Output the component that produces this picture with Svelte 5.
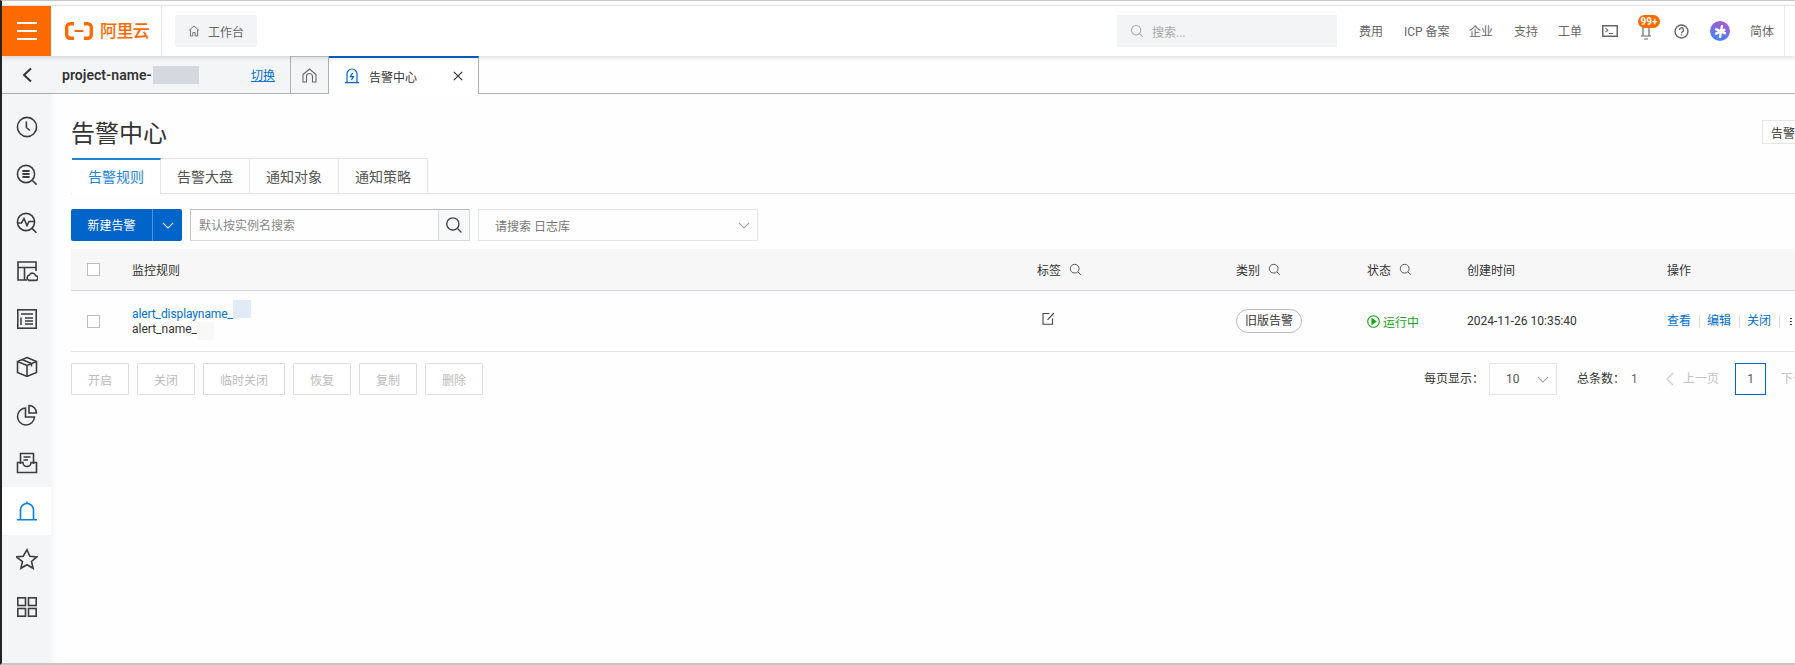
<script>
	const navLinks = [
		{ label: "费用", width: 45 },
		{ label: "ICP 备案", width: 65 },
		{ label: "企业", width: 45 },
		{ label: "支持", width: 44 },
		{ label: "工单", width: 44 }
	];
	const tabs = ["告警规则", "告警大盘", "通知对象", "通知策略"];
	const actions = [
		{ label: "开启", width: 58 },
		{ label: "关闭", width: 58 },
		{ label: "临时关闭", width: 82 },
		{ label: "恢复", width: 58 },
		{ label: "复制", width: 58 },
		{ label: "删除", width: 58 }
	];
	const sideIcons = ["clock", "logs", "pulse", "board", "list", "box", "pie", "inbox", "bell", "star", "apps"];
</script>

{#snippet search(size)}
	<svg width={size} height={size} viewBox="0 0 16 16" fill="none" stroke="currentColor" stroke-width="1.2">
		<circle cx="7" cy="7" r="5.4" />
		<path d="M11 11l3.6 3.6" />
	</svg>
{/snippet}

{#snippet chevron()}
	<svg width="12" height="7" viewBox="0 0 14 8" fill="none" stroke="currentColor" stroke-width="1.2">
		<path d="M1 1l6 6 6-6" />
	</svg>
{/snippet}

<div class="page">
	<header class="topbar">
		<div class="burger"><span></span><span></span><span></span></div>
		<div class="brand">
			<svg width="28" height="18" viewBox="0 0 28 18" fill="none" stroke="#ff6a00" stroke-width="3.4">
				<path d="M9 1.7H5.2a3.5 3.5 0 0 0-3.5 3.5v7.6a3.5 3.5 0 0 0 3.5 3.5H9" />
				<path d="M19 1.7h3.8a3.5 3.5 0 0 1 3.5 3.5v7.6a3.5 3.5 0 0 1-3.5 3.5H19" />
				<path d="M9.5 9h9" stroke-width="2" />
			</svg>
			<span>阿里云</span>
		</div>
		<div class="workbench">
			<svg width="12" height="12" viewBox="0 0 12 12" fill="none" stroke="#777" stroke-width="1">
				<path d="M1 5.4L6 1l5 4.4M2.4 4.6v6.4h2.4V7.6h2.4V11h2.4V4.6" />
			</svg>
			<span>工作台</span>
		</div>
		<div class="spacer"></div>
		<div class="topsearch">
			{@render search(14)}
			<span>搜索...</span>
		</div>
		<nav class="links">
			{#each navLinks as link}
				<span style="width: {link.width}px">{link.label}</span>
			{/each}
		</nav>
		<div class="tools">
			<svg class="terminal" width="16" height="12" viewBox="0 0 16 12" fill="none" stroke="#666">
				<rect x="0.75" y="0.75" width="14.5" height="10.5" stroke-width="1.5" />
				<path d="M3.5 3.2l2.3 2-2.3 2M7 8.5h4" stroke-width="1.1" />
			</svg>
			<div class="bell">
				<svg width="12" height="14" viewBox="0 0 12 14" fill="none" stroke="#666" stroke-width="1.2">
					<path d="M3 1v8.5M9 1v8.5M1 10h10M4 13h4" />
				</svg>
				<span class="badge">99+</span>
			</div>
			<svg class="help" width="15" height="15" viewBox="0 0 16 16" fill="none" stroke="#666" stroke-width="1.5">
				<circle cx="8" cy="8" r="6.9" />
				<path d="M5.8 6.3a2.2 2.2 0 1 1 3.3 1.9c-.7.4-1.1.8-1.1 1.7" />
				<path d="M8 11v1.3" />
			</svg>
			<div class="avatar">
				<svg width="13" height="15" viewBox="0 0 12 14" fill="none" stroke="#fff" stroke-width="2.2">
					<path d="M7.5 1L5.5 13M1 4.5l10 4.5M1 9.5L10.5 5" />
				</svg>
			</div>
			<span class="lang">简体</span>
		</div>
	</header>

	<div class="tabbar">
		<div class="project">
			<svg width="12" height="16" viewBox="0 0 12 16" fill="none" stroke="#333" stroke-width="2">
				<path d="M10 1.5L3 8l7 6.5" />
			</svg>
			<span class="project-name">project-name-<i class="blur"></i></span>
			<a href="#switch">切换</a>
		</div>
		<div class="home-tab">
			<svg width="15" height="15" viewBox="0 0 15 15" fill="none" stroke="#666" stroke-width="1.1">
				<path d="M1 6.5L7.5 1 14 6.5V14h-3.5V8.5a3 3 0 0 0-6 0V14H1z" />
			</svg>
		</div>
		<div class="active-tab">
			<svg width="16" height="16" viewBox="0 0 16 16" fill="none" stroke="#0064c8" stroke-width="1.2">
				<path d="M3 14V6a5 5 0 0 1 10 0v8M1 14.6h14" />
				<path d="M8.6 5L6.4 8.6h3.2L7.4 12" />
			</svg>
			<span>告警中心</span>
			<svg class="close" width="10" height="10" viewBox="0 0 10 10" stroke="#333" stroke-width="1.2">
				<path d="M.8.8l8.4 8.4M9.2.8L.8 9.2" />
			</svg>
		</div>
		<div class="tabbar-rest"></div>
	</div>

	<div class="body">
		<aside class="side">
			{#each sideIcons as icon}
				<div class="side-item" class:active={icon === "bell"}>
					<svg width="22" height="22" viewBox="0 0 22 22" fill="none" stroke={icon === "bell" ? "#0a7fe0" : "#3d3d3d"} stroke-width="1.6">
						{#if icon === "clock"}
							<circle cx="11" cy="11" r="9.6" />
							<path d="M10.4 5.5v6l3.4 3" />
						{:else if icon === "logs"}
							<circle cx="10" cy="10" r="8.6" />
							<path d="M16.2 16.2l4.4 4.4" />
							<path d="M6.4 7h7.2M6.4 10h7.2M6.4 13h7.2" stroke-width="2" />
						{:else if icon === "pulse"}
							<circle cx="10" cy="10" r="8.6" />
							<path d="M1 11h4.5l2.5-4.5 3 7 2-4h5.500" fill="#f4f5f7" />
							<path d="M16 16.4l4.4 4.4" />
						{:else if icon === "board"}
							<path d="M11 20H2V2h18v9" />
							<path d="M2 7.5h18M8.5 7.5V20" />
							<path d="M13 20.4h6.5a2.3 2.3 0 0 0 .2-4.6 3.3 3.3 0 0 0-6.2-.8 2.8 2.8 0 0 0-.5 5.4z" fill="#f4f5f7" />
						{:else if icon === "list"}
							<rect x="1.8" y="1.8" width="18.4" height="18.4" />
							<path d="M5 6h12M9 10h8M9 13h8M9 16h8M5 9.5v7.5" stroke-width="1.5" />
						{:else if icon === "box"}
							<path d="M11 1.5L20.5 5.5v11L11 20.5 1.5 16.5v-11z" />
							<path d="M1.5 5.5L11 9.5l9.5-4M11 9.5v11M6 3.5l9.5 4v3" />
						{:else if icon === "pie"}
							<path d="M9.5 4a8.5 8.5 0 1 0 9 9H9.5z" />
							<path d="M13 1.5a7.500 7.500 0 0 1 7.500 7.500H13z" />
						{:else if icon === "inbox"}
							<path d="M4.5 12V1.5h13V12" />
							<path d="M1.5 10.5v10h19v-10h-5.500a4 4 0 0 1-8 0z" />
							<path d="M7.5 5h7M7.5 8h4.500" stroke-width="1.5" />
						{:else if icon === "bell"}
							<path d="M4.5 19V10a6.500 6.500 0 0 1 13 0v9" />
							<path d="M11 1.5v2M1 19.800h20" />
						{:else if icon === "star"}
							<path d="M11 1.8l2.800 6.400 7 .7-5.300 4.600 1.600 6.800-6.100-3.600-6.100 3.600 1.600-6.800L.2 8.900l7-.7z" />
						{:else}
							<rect x="1.8" y="1.8" width="7.7" height="7.7" />
							<rect x="12.5" y="1.8" width="7.7" height="7.7" />
							<rect x="1.8" y="12.5" width="7.7" height="7.7" />
							<rect x="12.5" y="12.5" width="7.7" height="7.7" />
						{/if}
					</svg>
				</div>
			{/each}
		</aside>

		<main class="content">
			<div class="title-row">
				<h1>告警中心</h1>
				<button class="corner">告警</button>
			</div>

			<div class="tabs">
				{#each tabs as tab, i}
					<div class="tab" class:on={i === 0}>{tab}</div>
				{/each}
			</div>

			<div class="toolbar">
				<div class="create">
					<span class="create-label">新建告警</span>
					<span class="create-arrow">{@render chevron()}</span>
				</div>
				<div class="searchbox">
					<span class="field">默认按实例名搜索</span>
					<span class="search-btn">{@render search(18)}</span>
				</div>
				<div class="logstore">
					<span>请搜索 日志库</span>
					{@render chevron()}
				</div>
			</div>

			<div class="table">
				<div class="row head">
					<div class="cell"><i class="check"></i></div>
					<div class="cell">监控规则</div>
					<div class="cell">标签<span class="filter">{@render search(13)}</span></div>
					<div class="cell">类别<span class="filter">{@render search(13)}</span></div>
					<div class="cell">状态<span class="filter">{@render search(13)}</span></div>
					<div class="cell">创建时间</div>
					<div class="cell">操作</div>
				</div>
				<div class="row item">
					<div class="cell"><i class="check"></i></div>
					<div class="cell names">
						<span class="display">alert_displayname_<i class="mask-blue"></i></span>
						<span class="name">alert_name_<i class="mask-grey"></i></span>
					</div>
					<div class="cell tag-cell">
						<svg width="13" height="13" viewBox="0 0 13 13" fill="none" stroke="#444" stroke-width="1.1">
							<path d="M10.5 6.5v5.700H1V1.5h6.500" />
							<path d="M5.5 7.800L12 1" />
						</svg>
					</div>
					<div class="cell"><span class="pill">旧版告警</span></div>
					<div class="cell running">
						<svg width="13" height="13" viewBox="0 0 13 13" fill="none" stroke="#14a314" stroke-width="1.1">
							<circle cx="6.5" cy="6.5" r="5.8" />
							<path d="M5 3.8l3.8 2.7L5 9.2z" fill="#14a314" />
						</svg>
						运行中
					</div>
					<div class="cell">2024-11-26 10:35:40</div>
					<div class="cell ops">
						<a href="#view">查看</a><a href="#edit">编辑</a><a href="#close">关闭</a><i class="more"></i>
					</div>
				</div>
			</div>

			<div class="footer">
				{#each actions as action}
					<button class="ghost" style="width: {action.width}px">{action.label}</button>
				{/each}
				<div class="spacer"></div>
				<div class="pager">
					<span class="per">每页显示：</span>
					<div class="size"><span>10</span>{@render chevron()}</div>
					<span class="total">总条数：<em>1</em></span>
					<svg class="prev-icon" width="8" height="14" viewBox="0 0 8 14" fill="none" stroke="#ccc" stroke-width="1.2">
						<path d="M7 1L1 7l6 6" />
					</svg>
					<span class="prev">上一页</span>
					<span class="current">1</span>
					<span class="next">下一页</span>
				</div>
			</div>
		</main>
	</div>
</div>

<style>
	:global(body) {
		margin: 0;
		background: #fff;
	}
	.page {
		width: 1795px;
		height: 665px;
		box-sizing: border-box;
		border-top: 1px solid #c6c6c6;
		border-left: 2px solid #222;
		border-bottom: 2px solid #c6c6c6;
		padding-top: 4px;
		overflow: hidden;
		display: flex;
		flex-direction: column;
		background: #fefefe;
		color: #333;
		font-family: Roboto, "Noto Sans CJK SC", sans-serif;
		font-size: 12px;
	}
	.topbar {
		height: 51px;
		flex-shrink: 0;
		box-sizing: border-box;
		border-top: 1px solid #e2e2e2;
		display: flex;
		align-items: center;
		position: relative;
		z-index: 2;
		background: #fff;
		box-shadow: 0 2px 5px rgba(0, 0, 0, 0.12);
		color: #666;
	}
	.burger {
		width: 49px;
		height: 50px;
		background: #ff6a00;
		display: flex;
		flex-direction: column;
		align-items: center;
		justify-content: center;
		gap: 6px;
	}
	.burger span {
		width: 20px;
		height: 2px;
		background: #fff;
	}
	.brand {
		width: 111px;
		height: 50px;
		box-sizing: border-box;
		border-right: 1px solid #e6e6e6;
		padding-left: 14px;
		display: flex;
		align-items: center;
		gap: 7px;
		color: #ff6a00;
		font-size: 17px;
		letter-spacing: -0.6px;
		font-weight: 500;
		line-height: 1;
	}
	.workbench {
		width: 82px;
		height: 32px;
		margin-left: 13px;
		background: #f3f4f6;
		border-radius: 2px;
		display: flex;
		align-items: center;
		gap: 8px;
		padding-left: 13px;
		box-sizing: border-box;
	}
	.spacer {
		flex: 1;
	}
	.topsearch {
		width: 220px;
		height: 32px;
		box-sizing: border-box;
		background: #f3f4f6;
		display: flex;
		align-items: center;
		gap: 8px;
		padding-left: 13px;
		color: #aaa;
	}
	.links {
		display: flex;
		margin: -2px 0 0 22px;
	}
	.tools {
		display: flex;
		align-items: center;
		width: 183px;
		height: 50px;
		margin-right: 10px;
		box-sizing: border-box;
		border-right: 1px solid #ececec;
	}
	.bell {
		position: relative;
		margin-left: 22px;
		height: 14px;
		margin-top: 4px;
	}
	.badge {
		position: absolute;
		left: -2px;
		top: -11px;
		width: 22px;
		height: 13px;
		border-radius: 7px;
		background: #ff6a00;
		color: #fff;
		font-size: 10px;
		font-weight: 700;
		line-height: 13px;
		text-align: center;
	}
	.help {
		margin-left: 22px;
	}
	.avatar {
		width: 20px;
		height: 20px;
		margin-left: 21px;
		border-radius: 50%;
		background: linear-gradient(200deg, #c04fc4, #4d7ff5 75%);
		display: flex;
		align-items: center;
		justify-content: center;
	}
	.lang {
		margin: -2px 0 0 20px;
	}
	.tabbar {
		height: 38px;
		flex-shrink: 0;
		display: flex;
		background: #fefefe;
	}
	.project {
		width: 288px;
		box-sizing: border-box;
		background: #f4f5f7;
		border-bottom: 1px solid #b0b0b0;
		display: flex;
		align-items: center;
		padding-left: 19px;
	}
	.project-name {
		margin-left: 29px;
		font-size: 14px;
		font-weight: 600;
		color: #333;
		width: 189px;
		flex-shrink: 0;
		white-space: nowrap;
		display: flex;
		align-items: center;
		letter-spacing: 0.05px;
	}
	.blur {
		width: 46px;
		height: 18px;
		margin-left: 1px;
		background: #d5d9df;
	}
	.project a {
		color: #0070cc;
		font-size: 12px;
	}
	.home-tab {
		width: 39px;
		box-sizing: border-box;
		border: 1px solid #b0b0b0;
		border-top-color: #c8c8c8;
		background: #f4f5f7;
		display: flex;
		align-items: center;
		justify-content: center;
	}
	.active-tab {
		width: 150px;
		box-sizing: border-box;
		border-top: 2px solid #0064c8;
		border-right: 1px solid #b0b0b0;
		background: #fff;
		display: flex;
		align-items: center;
		padding-left: 15px;
		gap: 9px;
		color: #333;
	}
	.close {
		margin-left: 27px;
	}
	.tabbar-rest {
		flex: 1;
		border-bottom: 1px solid #b0b0b0;
	}
	.body {
		flex: 1;
		display: flex;
		min-height: 0;
	}
	.side {
		width: 49px;
		flex-shrink: 0;
		background: #f4f5f7;
		box-shadow: 2px 0 6px rgba(0, 0, 0, 0.04);
		padding-top: 9px;
		display: flex;
		flex-direction: column;
	}
	.side-item {
		height: 48px;
		flex-shrink: 0;
		display: flex;
		align-items: center;
		justify-content: center;
	}
	.side-item.active {
		background: #fff;
	}
	.content {
		flex: 1;
		min-width: 0;
		padding: 26px 0 0 20px;
		overflow: hidden;
	}
	.title-row {
		display: flex;
		align-items: flex-start;
		justify-content: space-between;
		height: 38px;
	}
	h1 {
		margin: 0;
		font-size: 24px;
		font-weight: 400;
		line-height: 28px;
		color: #333;
	}
	.corner {
		width: 33px;
		height: 24px;
		border: 1px solid #e3e5e8;
		border-right: 0;
		background: #fff;
		padding: 0 0 0 8px;
		font: inherit;
		color: #333;
		white-space: nowrap;
		overflow: hidden;
		text-align: left;
	}
	.tabs {
		display: flex;
		height: 36px;
		box-sizing: border-box;
		border-bottom: 1px solid #e3e5e8;
		padding-left: 1px;
	}
	.tab {
		width: 89px;
		height: 35px;
		box-sizing: border-box;
		border: 1px solid #e3e5e8;
		border-left: 0;
		border-bottom: 0;
		text-align: center;
		line-height: 36px;
		font-size: 14px;
		color: #555;
	}
	.tab.on {
		height: 36px;
		border-top: 2px solid #1f84d6;
		color: #1f84d6;
		background: #fff;
		line-height: 34px;
	}
	.toolbar {
		display: flex;
		margin-top: 15px;
		height: 32px;
	}
	.create {
		width: 111px;
		background: #0064c8;
		border-radius: 2px;
		display: flex;
		color: #fff;
		align-items: center;
	}
	.create-label {
		width: 81px;
		height: 32px;
		text-align: center;
		border-right: 1px solid #4f93d9;
		line-height: 34px;
	}
	.create-arrow {
		flex: 1;
		text-align: center;
		line-height: 0;
	}
	.searchbox {
		margin-left: 8px;
		width: 280px;
		display: flex;
		box-sizing: border-box;
		border: 1px solid #d7d8da;
		border-top-color: #bbb;
		border-left-color: #c2c2c2;
	}
	.field {
		flex: 1;
		padding-left: 8px;
		line-height: 32px;
		color: #888;
		border-right: 1px solid #d7d8da;
	}
	.search-btn {
		width: 30px;
		background: #f7f8f9;
		color: #444;
		display: flex;
		align-items: center;
		justify-content: center;
	}
	.logstore {
		margin-left: 8px;
		width: 280px;
		box-sizing: border-box;
		border: 1px solid #e3e5e8;
		display: flex;
		align-items: center;
		justify-content: space-between;
		padding: 0 7px 0 16px;
		color: #777;
	}
	.logstore svg,
	.size svg {
		color: #999;
	}
	.table {
		margin-top: 8px;
		width: 1740px;
	}
	.row {
		display: grid;
		grid-template-columns: 61px 905px 199px 131px 100px 200px 144px;
		align-items: center;
		box-sizing: border-box;
	}
	.head {
		height: 42px;
		background: #f7f7f7;
		border-bottom: 1px solid #d5d8dd;
	}
	.item {
		height: 61px;
		border-bottom: 1px solid #e3e5e8;
	}
	.cell {
		display: flex;
		align-items: center;
		white-space: nowrap;
	}
	.check {
		width: 11px;
		height: 11px;
		margin-left: 16px;
		border: 1px solid #bdbdbd;
		background: #fff;
	}
	.filter {
		margin-left: 8px;
		display: flex;
		color: #555;
	}
	.names {
		flex-direction: column;
		align-items: flex-start;
		gap: 1px;
	}
	.display {
		color: #0070cc;
		position: relative;
		letter-spacing: -0.1px;
	}
	.name {
		position: relative;
	}
	.mask-blue {
		position: absolute;
		left: 100%;
		top: -7px;
		width: 18px;
		height: 18px;
		background: #e0ebf7;
	}
	.mask-grey {
		position: absolute;
		left: 100%;
		top: 0;
		width: 17px;
		height: 18px;
		background: #f8f8f8;
	}
	.tag-cell {
		padding-left: 5px;
		margin-top: -6px;
	}
	.pill {
		width: 66px;
		height: 24px;
		box-sizing: border-box;
		border: 1px solid #bbb;
		border-radius: 12px;
		text-align: center;
		line-height: 22px;
	}
	.running {
		color: #14a314;
		gap: 3px;
	}
	.ops a {
		color: #0070cc;
		text-decoration: none;
		padding-right: 8px;
		margin-right: 7px;
		border-right: 1px solid #dcdcdc;
		line-height: 13px;
	}
	.more {
		width: 2px;
		height: 8px;
		margin-left: 3px;
		background: radial-gradient(circle, #444 1px, transparent 1px) 0 0 / 2px 3px;
	}
	.footer {
		display: flex;
		margin-top: 11px;
		gap: 8px;
		align-items: center;
		width: 1740px;
	}
	.ghost {
		height: 32px;
		box-sizing: border-box;
		border: 1px solid #dcdde0;
		background: #fff;
		padding: 0;
		color: #bbb;
		font: inherit;
		border-radius: 1px;
	}
	.pager {
		display: flex;
		align-items: center;
		height: 32px;
		width: 387px;
		flex-shrink: 0;
		white-space: nowrap;
		line-height: 30px;
	}
	.per {
		width: 65px;
		flex-shrink: 0;
	}
	.size {
		width: 68px;
		height: 32px;
		flex-shrink: 0;
		box-sizing: border-box;
		border: 1px solid #e3e5e8;
		display: flex;
		align-items: center;
		justify-content: space-between;
		padding: 0 7px 0 16px;
		color: #555;
	}
	.total {
		margin-left: 20px;
		width: 89px;
		flex-shrink: 0;
	}
	.total em {
		font-style: normal;
		margin-left: 6px;
		color: #666;
	}
	.prev-icon {
		flex-shrink: 0;
	}
	.prev {
		margin-left: 9px;
		width: 52px;
		flex-shrink: 0;
		color: #c4c4c4;
	}
	.current {
		width: 31px;
		height: 32px;
		box-sizing: border-box;
		border: 1px solid #0064c8;
		text-align: center;
		line-height: 30px;
		flex-shrink: 0;
		color: #555;
	}
	.next {
		margin-left: 15px;
		color: #c4c4c4;
	}
</style>
